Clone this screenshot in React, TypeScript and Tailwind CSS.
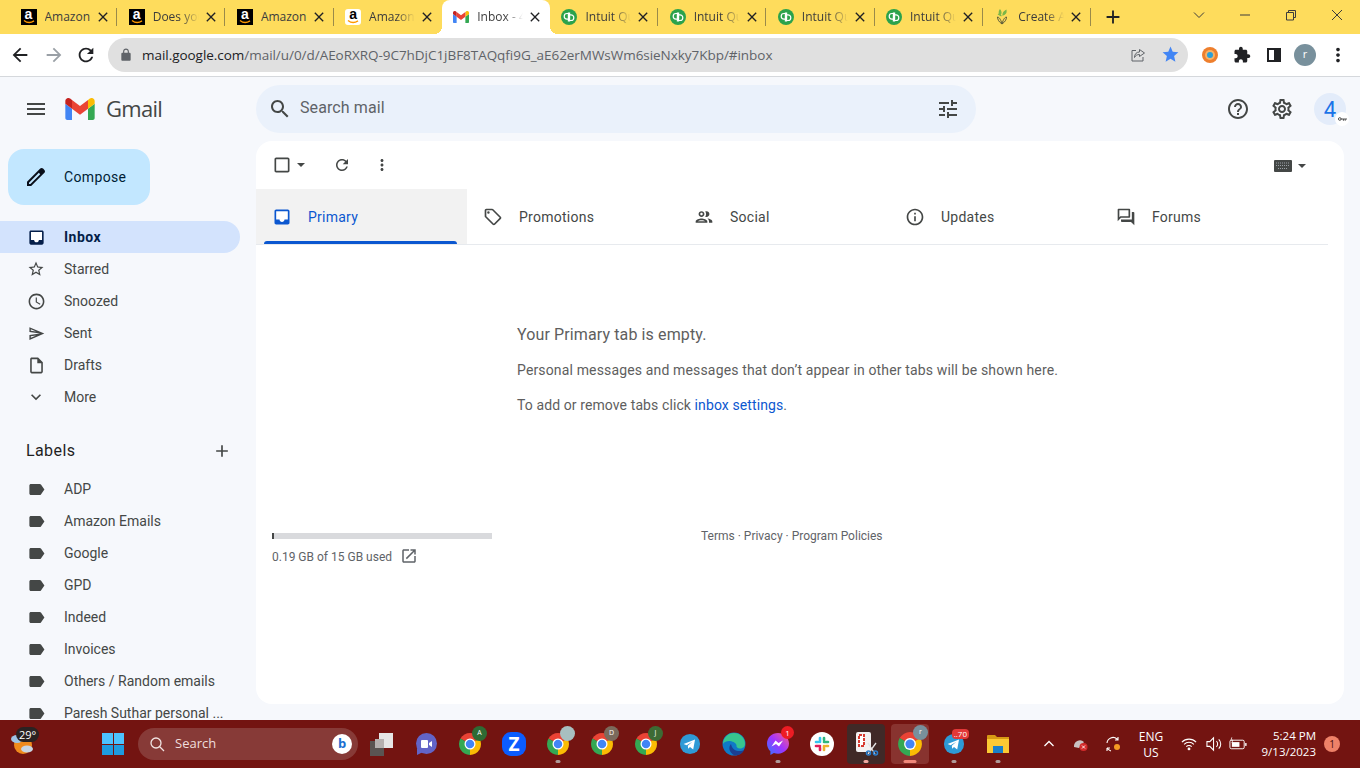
import type { ReactNode } from "react";

const ICONS = {
  inbox: "M19 3H4.99c-1.11 0-1.98.9-1.98 2L3 19c0 1.1.88 2 1.99 2H19c1.1 0 2-.9 2-2V5c0-1.1-.9-2-2-2zm0 12h-4c0 1.66-1.35 3-3 3s-3-1.34-3-3H4.99V5H19v10z",
  star: "M22 9.24l-7.19-.62L12 2 9.19 8.63 2 9.24l5.46 4.73L5.82 21 12 17.27 18.18 21l-1.63-7.03L22 9.24zM12 15.4l-3.76 2.27 1-4.28-3.32-2.88 4.38-.38L12 6.1l1.71 4.04 4.38.38-3.32 2.88 1 4.28L12 15.4z",
  clock: "M11.99 2C6.47 2 2 6.48 2 12s4.47 10 9.99 10C17.52 22 22 17.52 22 12S17.52 2 11.99 2zM12 20c-4.42 0-8-3.58-8-8s3.58-8 8-8 8 3.58 8 8-3.58 8-8 8zm.5-13H11v6l5.25 3.15.75-1.23-4.5-2.67z",
  send: "M4.01 6.03l7.51 3.22-7.52-1 .01-2.22m7.5 8.72L4 17.97v-2.22l7.51-1M2.01 3L2 10l15 2-15 2 .01 7L23 12 2.01 3z",
  draft: "M14 2H6c-1.1 0-1.99.9-1.99 2L4 20c0 1.1.89 2 1.99 2H18c1.1 0 2-.9 2-2V8l-6-6zM6 20V4h7v5h5v11H6z",
  chevron: "M16.59 8.59L12 13.17 7.41 8.59 6 10l6 6 6-6z",
  label: "M17.63 5.84C17.27 5.33 16.67 5 16 5L5 5.01C3.9 5.01 3 5.9 3 7v10c0 1.1.9 1.99 2 1.99L16 19c.67 0 1.27-.33 1.63-.84L22 12l-4.37-6.16z",
  pencil: "M20.41 4.94l-1.35-1.35c-.78-.78-2.05-.78-2.83 0L3 16.82V21h4.18L20.41 7.77c.79-.78.79-2.05 0-2.83zm-14 14.12L5 19v-1.36l9.82-9.82 1.41 1.41-9.82 9.83z",
  search: "M15.5 14h-.79l-.28-.27C15.41 12.59 16 11.11 16 9.5 16 5.91 13.09 3 9.5 3S3 5.91 3 9.5 5.91 16 9.5 16c1.61 0 3.09-.59 4.23-1.57l.27.28v.79l5 4.99L20.49 19l-4.99-5zm-6 0C7.01 14 5 11.99 5 9.5S7.01 5 9.5 5 14 7.01 14 9.5 11.99 14 9.5 14z",
  tune: "M3 17v2h6v-2H3zM3 5v2h10V5H3zm10 16v-2h8v-2h-8v-2h-2v6h2zM7 9v2H3v2h4v2h2V9H7zm14 4v-2H11v2h10zm-6-4h2V7h4V5h-4V3h-2v6z",
  help: "M11 18h2v-2h-2v2zm1-16C6.48 2 2 6.48 2 12s4.48 10 10 10 10-4.48 10-10S17.52 2 12 2zm0 18c-4.41 0-8-3.59-8-8s3.59-8 8-8 8 3.59 8 8-3.59 8-8 8zm0-14c-2.21 0-4 1.79-4 4h2c0-1.1.9-2 2-2s2 .9 2 2c0 2-3 1.75-3 5h2c0-2.25 3-2.5 3-5 0-2.21-1.79-4-4-4z",
  gear: "M19.43 12.98c.04-.32.07-.64.07-.98 0-.34-.03-.66-.07-.98l2.11-1.65c.19-.15.24-.42.12-.64l-2-3.46c-.09-.16-.26-.25-.44-.25-.06 0-.12.01-.17.03l-2.49 1c-.52-.4-1.08-.73-1.69-.98l-.38-2.65C14.46 2.18 14.25 2 14 2h-4c-.25 0-.46.18-.49.42l-.38 2.65c-.61.25-1.17.59-1.69.98l-2.49-1c-.06-.02-.12-.03-.18-.03-.17 0-.34.09-.43.25l-2 3.46c-.13.22-.07.49.12.64l2.11 1.65c-.04.32-.07.65-.07.98 0 .33.03.66.07.98l-2.11 1.65c-.19.15-.24.42-.12.64l2 3.46c.09.16.26.25.44.25.06 0 .12-.01.17-.03l2.49-1c.52.4 1.08.73 1.69.98l.38 2.65c.03.24.24.42.49.42h4c.25 0 .46-.18.49-.42l.38-2.65c.61-.25 1.17-.59 1.69-.98l2.49 1c.06.02.12.03.18.03.17 0 .34-.09.43-.25l2-3.46c.12-.22.07-.49-.12-.64l-2.11-1.65zm-1.98-1.71c.04.31.05.52.05.73 0 .21-.02.43-.05.73l-.14 1.13.89.7 1.08.84-.7 1.21-1.27-.51-1.04-.42-.9.68c-.43.32-.84.56-1.25.73l-1.06.43-.16 1.13-.2 1.35h-1.4l-.19-1.35-.16-1.13-1.06-.43c-.43-.18-.83-.41-1.23-.71l-.91-.7-1.06.43-1.27.51-.7-1.21 1.08-.84.89-.7-.14-1.13c-.03-.31-.05-.54-.05-.74s.02-.43.05-.73l.14-1.13-.89-.7-1.08-.84.7-1.21 1.27.51 1.04.42.9-.68c.43-.32.84-.56 1.25-.73l1.06-.43.16-1.13.2-1.35h1.39l.19 1.35.16 1.13 1.06.43c.43.18.83.41 1.23.71l.91.7 1.06-.43 1.27-.51.7 1.21-1.07.85-.89.7.14 1.13zM12 8c-2.21 0-4 1.79-4 4s1.79 4 4 4 4-1.79 4-4-1.79-4-4-4zm0 6c-1.1 0-2-.9-2-2s.9-2 2-2 2 .9 2 2-.9 2-2 2z",
  refresh: "M17.65 6.35C16.2 4.9 14.21 4 12 4c-4.42 0-7.99 3.58-7.99 8s3.57 8 7.99 8c3.73 0 6.84-2.55 7.73-6h-2.08c-.82 2.33-3.04 4-5.65 4-3.31 0-6-2.69-6-6s2.69-6 6-6c1.66 0 3.14.69 4.22 1.78L13 11h7V4l-2.35 2.35z",
  dots: "M12 8c1.1 0 2-.9 2-2s-.9-2-2-2-2 .9-2 2 .9 2 2 2zm0 2c-1.1 0-2 .9-2 2s.9 2 2 2 2-.9 2-2-.9-2-2-2zm0 6c-1.1 0-2 .9-2 2s.9 2 2 2 2-.9 2-2-.9-2-2-2z",
  tag: "M21.41 11.58l-9-9C12.05 2.22 11.55 2 11 2H4c-1.1 0-2 .9-2 2v7c0 .55.22 1.05.59 1.42l9 9c.36.36.86.58 1.41.58s1.05-.22 1.41-.59l7-7c.37-.36.59-.86.59-1.41s-.23-1.06-.59-1.42zM13 20.01L4 11V4h7v-.01l9 8.99-7 7.03zM6.5 5A1.5 1.5 0 1 0 6.5 8 1.5 1.5 0 1 0 6.5 5z",
  people: "M9 13.75c-2.34 0-7 1.17-7 3.5V19h14v-1.75c0-2.33-4.66-3.5-7-3.5zM4.34 17c.84-.58 2.87-1.25 4.66-1.25s3.82.67 4.66 1.25H4.34zM9 12c1.93 0 3.5-1.57 3.5-3.5S10.93 5 9 5 5.5 6.57 5.5 8.5 7.07 12 9 12zm0-5c.83 0 1.5.67 1.5 1.5S9.83 10 9 10s-1.5-.67-1.5-1.5S8.17 7 9 7zm7.04 6.81c1.16.84 1.96 1.96 1.96 3.44V19h4v-1.75c0-2.02-3.5-3.17-5.96-3.44zM15 12c1.93 0 3.5-1.57 3.5-3.5S16.93 5 15 5c-.54 0-1.04.13-1.5.35.63.89 1 1.98 1 3.15s-.37 2.26-1 3.15c.46.22.96.35 1.5.35z",
  info: "M11 7h2v2h-2zm0 4h2v6h-2zm1-9C6.48 2 2 6.48 2 12s4.48 10 10 10 10-4.48 10-10S17.52 2 12 2zm0 18c-4.41 0-8-3.59-8-8s3.59-8 8-8 8 3.59 8 8-3.59 8-8 8z",
  forum: "M15 4v7H5.17l-.59.59-.58.58V4h11m1-2H3c-.55 0-1 .45-1 1v14l4-4h10c.55 0 1-.45 1-1V3c0-.55-.45-1-1-1zm5 4h-2v9H6v2c0 .55.45 1 1 1h11l4 4V7c0-.55-.45-1-1-1z",
  open: "M19 19H5V5h7V3H5c-1.11 0-2 .9-2 2v14c0 1.1.89 2 2 2h14c1.1 0 2-.9 2-2v-7h-2v7zM14 3v2h3.59l-9.83 9.83 1.41 1.41L19 6.41V10h2V3h-7z",
  menu: "M3 18h18v-2H3v2zm0-5h18v-2H3v2zm0-7v2h18V6H3z",
  plus: "M19 13h-6v6h-2v-6H5v-2h6V5h2v6h6v2z",
  checkbox: "M19 5v14H5V5h14m0-2H5c-1.1 0-2 .9-2 2v14c0 1.1.9 2 2 2h14c1.1 0 2-.9 2-2V5c0-1.1-.9-2-2-2z",
  back: "M20 11H7.83l5.59-5.59L12 4l-8 8 8 8 1.41-1.41L7.83 13H20v-2z",
  forward: "M12 4l-1.41 1.41L16.17 11H4v2h12.17l-5.58 5.59L12 20l8-8z",
  lock: "M18 8h-1V6c0-2.76-2.24-5-5-5S7 3.24 7 6v2H6c-1.1 0-2 .9-2 2v10c0 1.1.9 2 2 2h12c1.1 0 2-.9 2-2V10c0-1.1-.9-2-2-2zM9 6c0-1.66 1.34-3 3-3s3 1.34 3 3v2H9V6z",
  starFill: "M12 17.27L18.18 21l-1.64-7.03L22 9.24l-7.19-.61L12 2 9.19 8.63 2 9.24l5.46 4.73L5.82 21z",
  puzzle: "M20.5 11H19V7c0-1.1-.9-2-2-2h-4V3.5C13 2.12 11.88 1 10.5 1S8 2.12 8 3.5V5H4c-1.1 0-1.99.9-1.99 2v3.8H3.5c1.49 0 2.7 1.21 2.7 2.7s-1.21 2.7-2.7 2.7H2V20c0 1.1.9 2 2 2h3.8v-1.5c0-1.49 1.21-2.7 2.7-2.7s2.7 1.21 2.7 2.7V22H17c1.1 0 2-.9 2-2v-4h1.5c1.38 0 2.5-1.12 2.5-2.5S21.88 11 20.5 11z",
  close: "M19 6.41L17.59 5 12 10.59 6.41 5 5 6.41 10.59 12 5 17.59 6.41 19 12 13.41 17.59 19 19 17.59 13.41 12z",
};

function Icon({ name, className }: { name: keyof typeof ICONS; className: string }) {
  return (
    <svg viewBox="0 0 24 24" fill="currentColor" className={`shrink-0 ${className}`}>
      {/* the inbox glyph has a white tray in gmail */}
      {name === "inbox" && <path d="M5 5h14v10h-4c0 1.66-1.35 3-3 3s-3-1.34-3-3H5z" fill="#fff" />}
      <path d={ICONS[name]} />
    </svg>
  );
}

function AmazonFav({ light }: { light?: boolean }) {
  return (
    <div className={`relative w-4 h-4 shrink-0 overflow-hidden ${light ? "bg-white rounded-[3px]" : "bg-black"}`}>
      <span className={`absolute inset-x-0 -top-[3px] text-center text-[14px] font-bold leading-[16px] font-['Liberation_Sans',sans-serif] ${light ? "text-black" : "text-white"}`}>a</span>
      <svg viewBox="0 0 16 16" className="absolute inset-0 w-4 h-4">
        <path d="M3 11.5c3 2.4 7 2.4 10 .4" stroke="#f90" strokeWidth="1.4" fill="none" />
      </svg>
    </div>
  );
}

function QbFav() {
  return (
    <svg viewBox="0 0 16 16" className="w-4 h-4 shrink-0">
      <circle cx="8" cy="8" r="8" fill="#2ba24c" />
      <path d="M7.4 4.5H6a2.6 2.6 0 0 0 0 5.6h.8M7.4 3.4v9M8.6 11.5H10a2.6 2.6 0 0 0 0-5.6h-.8M8.6 3.6v9" stroke="#fff" strokeWidth="1.2" fill="none" />
    </svg>
  );
}

function GmailLogo({ className }: { className: string }) {
  return (
    <svg viewBox="52 42 88 66" className={className}>
      <path fill="#4285f4" d="M58 108h14V74L52 59v43c0 3.32 2.69 6 6 6" />
      <path fill="#34a853" d="M120 108h14c3.32 0 6-2.69 6-6V59l-20 15" />
      <path fill="#fbbc04" d="M120 48v26l20-15v-8c0-7.42-8.47-11.65-14.4-7.2" />
      <path fill="#ea4335" d="M72 74V48l24 18 24-18v26L96 92" />
      <path fill="#c5221f" d="M52 51v8l20 15V48l-5.6-4.2c-5.94-4.45-14.4-.22-14.4 7.2" />
    </svg>
  );
}

function PlantFav() {
  return (
    <svg viewBox="0 0 16 16" className="w-4 h-4 shrink-0">
      <path d="M8 15C5 13 3.5 10.5 3.5 8c1.5.3 3 1.5 4.5 7zM8 15c3-2 4.5-4.5 4.5-7-1.500.3-3 1.500-4.500 7z" fill="none" stroke="#5a5a3a" strokeWidth="1" />
      <path d="M6 6C5 4 5 2.500 6 1c1.200 1.500 1.500 3 0 5zM9 6c0-2 1-3.500 3-4.500.3 2-.8 3.800-3 4.500zM7.500 7 4 5" stroke="#7ab648" strokeWidth="1.200" fill="#7ab648" />
    </svg>
  );
}

const TABS: { title: string; fav: ReactNode; active?: boolean; full?: boolean }[] = [
  { title: "Amazon", fav: <AmazonFav />, full: true },
  { title: "Does your", fav: <AmazonFav /> },
  { title: "Amazon", fav: <AmazonFav />, full: true },
  { title: "Amazon.com", fav: <AmazonFav light /> },
  { title: "Inbox - 4", fav: <GmailLogo className="w-4 h-3 shrink-0" />, active: true },
  { title: "Intuit Quick", fav: <QbFav /> },
  { title: "Intuit Quick", fav: <QbFav /> },
  { title: "Intuit Quick", fav: <QbFav /> },
  { title: "Intuit Quick", fav: <QbFav /> },
  { title: "Create An", fav: <PlantFav /> },
];

function Tab({ title, fav, active, full, hideSep }: { title: string; fav: ReactNode; active?: boolean; full?: boolean; hideSep?: boolean }) {
  return (
    <div className={`relative flex items-center w-[108.2px] h-full pl-[11.5px] pb-[1px] shrink-0 ${active ? "bg-white rounded-t-lg" : ""}`}>
      {active && <div className="absolute -left-2 bottom-0 w-2 h-2 bg-[radial-gradient(circle_at_0_0,transparent_8px,white_8px)]" />}
      {active && <div className="absolute -right-2 bottom-0 w-2 h-2 bg-[radial-gradient(circle_at_100%_0,transparent_8px,white_8px)]" />}
      {fav}
      <span className={`ml-2 w-[46px] overflow-hidden whitespace-nowrap text-[12px] text-[#3c3c3c] ${full ? "" : "[mask-image:linear-gradient(to_right,black_60%,transparent)]"}`}>
        {title}
      </span>
      <Icon name="close" className="w-4 h-4 ml-1 text-[#202124]" />
      {!active && !hideSep && <div className="absolute right-0 top-[8px] h-[18px] w-px bg-[#9a8a4a]" />}
    </div>
  );
}

function TabStrip() {
  return (
    <div className="flex items-center h-[34px] bg-[#fedc5c] pl-[9px] font-['Open_Sans',sans-serif]">
      <div className="flex h-full">
        {TABS.map((t, i) => (
          <Tab key={i} title={t.title} fav={t.fav} active={t.active} full={t.full} hideSep={i === 3} />
        ))}
      </div>
      <Icon name="plus" className="w-[22px] h-[22px] ml-[11px] text-[#202124]" />
      <div className="flex items-center h-full ml-auto text-[#3c3c3c]">
        <svg viewBox="0 0 12 12" className="w-3 h-3 mr-[34px] mb-[4px]"><path d="M1 3.500l5 5 5-5" stroke="currentColor" fill="none" /></svg>
        <svg viewBox="0 0 12 12" className="w-3 h-3 mr-[34px] mb-[4px]"><path d="M1 6h10" stroke="currentColor" fill="none" /></svg>
        <svg viewBox="0 0 12 12" className="w-3 h-3 mr-[34px] mb-[4px]"><path d="M1.500 3.500h7v7.500h-7zM3.500 3.500V1.500h7v7h-2" stroke="currentColor" fill="none" /></svg>
        <svg viewBox="0 0 12 12" className="w-3 h-3 mr-[17px] mb-[4px]"><path d="M1 1l10 10M11 1 1 11" stroke="currentColor" fill="none" /></svg>
      </div>
    </div>
  );
}

function Toolbar() {
  return (
    <div className="flex items-center h-[43px] bg-white border-b border-[#d5d8dc] pb-[1px] font-['Open_Sans',sans-serif]">
      <Icon name="back" className="w-[22px] h-[22px] ml-[9px] text-[#202124]" />
      <Icon name="forward" className="w-[22px] h-[22px] ml-[12px] text-[#9aa0a6]" />
      <Icon name="refresh" className="w-[22px] h-[22px] ml-[10px] text-[#202124]" />
      <div className="flex items-center w-[1080px] h-[34px] ml-[11px] rounded-full bg-[#e0e0e0] pl-[11px]">
        <Icon name="lock" className="w-[14px] h-[14px] text-[#5f6368]" />
        <div className="ml-[9px] pt-[1px] text-[13.5px] tracking-[-0.04px] whitespace-nowrap text-[#5f6368]">
          <span className="text-[#202124]">mail.google.com</span>/mail/u/0/d/AEoRXRQ-9C7hDjC1jBF8TAQqfi9G_aE62erMWsWm6sieNxky7Kbp/#inbox
        </div>
        <svg viewBox="0 0 16 16" className="w-4 h-4 ml-auto text-[#5f6368]" fill="none" stroke="currentColor">
          <path d="M6 3.500H2v10.500h11v-4M9.500 2.500l5 3.500-5 3.500V7.500c-2.500 0-4 1-5 3 0-3.500 2-5.500 5-5.500z" />
        </svg>
        <Icon name="starFill" className="w-[19px] h-[19px] ml-[15px] mr-[8px] text-[#4285f4]" />
      </div>
      <svg viewBox="0 0 16 16" className="w-4 h-4 ml-[14px]">
        <circle cx="8" cy="8" r="8" fill="#ee7f2d" />
        <circle cx="8" cy="8" r="5" fill="#f7b267" />
        <circle cx="8" cy="8" r="3" fill="#2a9fd8" />
      </svg>
      <Icon name="puzzle" className="w-[18px] h-[18px] ml-[15px] text-[#202124]" />
      <div className="flex w-[14px] h-[14px] ml-4 border-2 border-[#202124]"><div className="ml-auto w-[5px] bg-[#202124]" /></div>
      <div className="flex items-center justify-center w-[22px] h-[22px] ml-[13px] rounded-full bg-[#78909c] text-[11px] text-white">r</div>
      <Icon name="dots" className="w-[22px] h-[22px] ml-[11px] text-[#202124]" />
    </div>
  );
}

const NAV_ICON_SIZE: Partial<Record<keyof typeof ICONS, string>> = {
  star: "w-[18px] h-[18px] mx-[1px]",
  send: "w-[17px] h-[17px] mx-[1.5px]",
  inbox: "w-[19px] h-[19px] mx-[0.5px]",
  clock: "w-[19px] h-[19px] mx-[0.5px]",
  draft: "w-[19px] h-[19px] mx-[0.5px]",
  label: "w-[19px] h-[19px] mx-[0.5px]",
};

function NavRow({ icon, label, active }: { icon: keyof typeof ICONS; label: string; active?: boolean }) {
  return (
    <div className={`flex items-center h-8 w-[240px] shrink-0 pl-[26px] gap-[18px] rounded-r-full text-[14px] whitespace-nowrap ${active ? "bg-[#d3e3fd] font-bold tracking-[0.5px] text-[#041e49]" : "text-[#444746]"}`}>
      <Icon name={icon} className={`${NAV_ICON_SIZE[icon] ?? "w-5 h-5"} ${active ? "text-[#041e49]" : "text-[#444746]"}`} />
      <span>{label}</span>
    </div>
  );
}

const LABELS = ["ADP", "Amazon Emails", "Google", "GPD", "Indeed", "Invoices", "Others / Random emails", "Paresh Suthar personal ..."];

function Sidebar() {
  return (
    <div className="w-[256px] shrink-0 overflow-hidden flex flex-col">
      <div className="flex items-center w-[142px] h-14 shrink-0 ml-2 mt-2 mb-4 pl-4 gap-[16px] rounded-2xl bg-[#c2e7ff] text-[14px] font-[450] tracking-[0.35px] text-[#001d35]">
        <Icon name="pencil" className="w-6 h-6 text-[#0a0f1a]" />
        <span>Compose</span>
      </div>
      <NavRow icon="inbox" label="Inbox" active />
      <NavRow icon="star" label="Starred" />
      <NavRow icon="clock" label="Snoozed" />
      <NavRow icon="send" label="Sent" />
      <NavRow icon="draft" label="Drafts" />
      <NavRow icon="chevron" label="More" />
      <div className="flex items-center justify-between shrink-0 h-[44px] mt-4 pl-[26px] pr-2 w-[240px] text-[16px] tracking-[0.4px] text-[#1f1f1f]">
        <span>Labels</span>
        <Icon name="plus" className="w-5 h-5 text-[#444746]" />
      </div>
      {LABELS.map((l) => (
        <NavRow key={l} icon="label" label={l} />
      ))}
    </div>
  );
}

function InboxTab({ icon, label, active }: { icon: keyof typeof ICONS; label: string; active?: boolean }) {
  return (
    <div className={`relative flex items-center w-[211px] h-full pl-[16px] pt-[1px] gap-[16px] text-[14px] font-[450] tracking-[0.25px] ${active ? "bg-[#f2f2f2] text-[#0b57d0]" : "text-[#444746]"}`}>
      <Icon name={icon} className="w-5 h-5" />
      <span>{label}</span>
      {active && <div className="absolute left-2 right-[10px] bottom-0 h-[3px] rounded-t-sm bg-[#0b57d0]" />}
    </div>
  );
}

function MailCard() {
  return (
    <div className="flex-1 flex flex-col mr-4 mb-4 rounded-2xl bg-white">
      <div className="flex items-center h-12 shrink-0 pl-[16px] text-[#444746]">
        <Icon name="checkbox" className="w-5 h-5" />
        <div className="ml-[5px] w-0 h-0 border-x-[4px] border-x-transparent border-t-[4px] border-t-[#444746]" />
        <Icon name="refresh" className="w-[18px] h-[18px] ml-7" />
        <Icon name="dots" className="w-[18px] h-[18px] ml-[22px]" />
        <div className="flex items-center ml-auto mr-[38px] mt-[2px] gap-[6px]">
          <svg viewBox="0 0 18 12" className="w-[18px] h-3">
            <rect width="18" height="12" rx="1" fill="#444746" />
            <path d="M2 3h14M2 5.500h14M4 8.500h10" stroke="#9aa0a6" strokeWidth="1" strokeDasharray="1 1" />
          </svg>
          <div className="w-0 h-0 border-x-[4px] border-x-transparent border-t-[4px] border-t-[#444746]" />
        </div>
      </div>
      <div className="flex h-[56px] shrink-0 mr-4 border-b border-[#e7eaee]">
        <InboxTab icon="inbox" label="Primary" active />
        <InboxTab icon="tag" label="Promotions" />
        <InboxTab icon="people" label="Social" />
        <InboxTab icon="info" label="Updates" />
        <InboxTab icon="forum" label="Forums" />
      </div>
      <div className="pl-[261px] pt-[80px] text-[#5e5e5e]">
        <div className="text-[16px] leading-5 tracking-[0.12px]">Your Primary tab is empty.</div>
        <div className="mt-[15px] text-[14px] leading-5 tracking-[0.15px]">Personal messages and messages that don’t appear in other tabs will be shown here.</div>
        <div className="mt-[15px] text-[14px] leading-5 tracking-[0.1px]">
          To add or remove tabs click <span className="text-[#0b57d0]">inbox settings</span>.
        </div>
      </div>
      <div className="flex items-start pl-4 mt-[118px]">
        <div className="w-[220px]">
          <div className="h-[6px] bg-[#d9dadd]"><div className="w-[2px] h-full bg-[#444746]" /></div>
          <div className="flex items-center mt-[9px] text-[12px] text-[#5f6368]">
            <span>0.19 GB of 15 GB used</span>
            <Icon name="open" className="w-[18px] h-[18px] ml-2 -mt-[3px] text-[#5f6368]" />
          </div>
        </div>
        <div className="ml-[209px] -mt-[5px] text-[12px] leading-4 text-[#5f6368]">Terms · Privacy · Program Policies</div>
      </div>
    </div>
  );
}

function Header() {
  return (
    <div className="flex items-center h-16 shrink-0">
      <div className="flex items-center w-[256px] shrink-0">
        <Icon name="menu" className="w-6 h-6 ml-6 text-[#444746]" />
        <GmailLogo className="w-[30px] h-[22px] ml-[17px]" />
        <span className="ml-[11px] -mt-[2px] text-[22px] text-[#444746] font-['Open_Sans',sans-serif] tracking-[-0.7px]">Gmail</span>
      </div>
      <div className="flex items-center w-[720px] h-12 rounded-full bg-[#eaf1fb] pl-[12px] pr-[16px]">
        <Icon name="search" className="w-6 h-6 text-[#444746]" />
        <span className="ml-[8px] -mt-[2px] text-[16px] tracking-[0.1px] text-[#5f6368]">Search mail</span>
        <Icon name="tune" className="w-6 h-6 ml-auto text-[#444746]" />
      </div>
      <div className="flex items-center ml-auto pr-[14px]">
        <Icon name="help" className="w-6 h-6 text-[#444746]" />
        <Icon name="gear" className="w-6 h-6 ml-[20px] text-[#444746]" />
        <div className="relative flex items-center justify-center w-8 h-8 ml-[20px] rounded-full bg-[#e3ecfa] text-[22px] text-[#1a73e8]">
          4
          <div className="absolute -right-[3px] -bottom-[1px] flex items-center justify-center w-[14px] h-[14px] rounded-full bg-white">
            <svg viewBox="0 0 10 6" className="w-[9px] h-[6px]"><path d="M3 3h7M8 3v2M6 3v2" stroke="#444" fill="none" /><circle cx="2" cy="3" r="1.500" fill="none" stroke="#444" /></svg>
          </div>
        </div>
      </div>
    </div>
  );
}

function Chrome({ badge, badgeClass, size = "w-6 h-6" }: { badge?: string; badgeClass?: string; size?: string }) {
  return (
    <div className="relative">
      <svg viewBox="0 0 48 48" className={size}>
        <path d="M24 24 43.050 13A22 22 0 0 0 4.950 13z" fill="#ea4335" />
        <path d="M24 24 4.950 13A22 22 0 0 0 24 46z" fill="#34a853" />
        <path d="M24 24 24 46A22 22 0 0 0 43.050 13z" fill="#fbbc04" />
        <circle cx="24" cy="24" r="11" fill="#fff" />
        <circle cx="24" cy="24" r="8.500" fill="#4285f4" />
      </svg>
      {badge !== undefined && (
        <div className={`absolute -right-[5px] -top-[6px] flex items-center justify-center w-[15px] h-[15px] rounded-full text-[7px] text-white ${badgeClass}`}>{badge}</div>
      )}
    </div>
  );
}

function Telegram() {
  return (
    <svg viewBox="0 0 24 24" className="w-[22px] h-[22px]">
      <circle cx="12" cy="12" r="11" fill="#2e9ad6" />
      <path d="M5 12l12.500-5-2 11-3.500-2.700-2 1.900-.4-3.200 5-4.500-6.300 3.800z" fill="#fff" />
    </svg>
  );
}

function Dock({ children, dot, bg, dotClass }: { children: ReactNode; dot?: boolean; bg?: string; dotClass?: string }) {
  return (
    <div className="relative flex items-center justify-center w-11 h-full shrink-0">
      {bg && <div className={`absolute left-[3px] right-[3px] top-[4px] bottom-[4px] rounded ${bg}`} />}
      <div className="relative">{children}</div>
      {dot && <div className={`absolute bottom-[5px] left-1/2 -translate-x-1/2 h-[3px] rounded-full ${dotClass ?? "w-[5px] bg-[#b09a98]"}`} />}
    </div>
  );
}

function Taskbar() {
  return (
    <div className="flex items-center h-12 shrink-0 bg-[#731411] text-white font-['Open_Sans',sans-serif]">
      <div className="relative w-[91px] h-full shrink-0">
        <svg viewBox="0 0 24 24" className="absolute left-[10px] top-[12px] w-6 h-6">
          <circle cx="13" cy="13" r="9" fill="#f08a1d" />
          <ellipse cx="7" cy="7" rx="6" ry="4" fill="#9ec3e6" />
          <ellipse cx="17" cy="17" rx="6" ry="3.500" fill="#c9d6e4" />
        </svg>
        <span className="absolute left-[16px] top-[7px] px-[3px] rounded-full bg-[#2a2222] text-[11px] leading-[15px]">29°</span>
      </div>
      <div className="grid grid-cols-2 gap-[1px] w-[22px] h-[22px] shrink-0 ml-[11px]">
        <div className="bg-[#4cc2ff]" /><div className="bg-[#4cc2ff]" /><div className="bg-[#1e9be0]" /><div className="bg-[#1e9be0]" />
      </div>
      <div className="flex items-center w-[220px] h-[32px] ml-[14px] shrink-0 rounded-full bg-[#873a37] pl-[11px] pr-[6px]">
        <svg viewBox="0 0 16 16" className="w-4 h-4" fill="none" stroke="#f1e4e3" strokeWidth="1.300"><circle cx="7" cy="7" r="5" /><path d="M10.500 10.500 15 15" /></svg>
        <span className="ml-[10px] text-[13px] text-[#efdedd]">Search</span>
        <div className="flex items-center justify-center ml-auto w-[20px] h-[20px] rounded-full bg-white text-[13px] font-bold text-[#1b6fd0]">b</div>
      </div>
      <div className="flex h-full ml-[2px]">
        <Dock>
          <div className="relative w-6 h-6">
            <div className="absolute left-0 bottom-0 w-[14px] h-[15px] bg-[#5a5452]" />
            <div className="absolute right-[1px] top-[1px] w-[14px] h-[15px] bg-[#e6e6e6]" />
            <div className="absolute left-[5px] top-[7px] w-[9px] h-[9px] bg-[#b5b0af]" />
          </div>
        </Dock>
        <Dock>
          <svg viewBox="0 0 24 24" className="w-6 h-6">
            <circle cx="12.500" cy="11.500" r="10.500" fill="#6264c7" />
            <path d="M3 16v7l6-3z" fill="#6264c7" />
            <rect x="7" y="8" width="7" height="8" rx="1" fill="#fff" />
            <path d="M15 11l3-2v6l-3-2z" fill="#fff" />
          </svg>
        </Dock>
        <Dock><Chrome badge="A" badgeClass="bg-[#2e6b34]" /></Dock>
        <Dock>
          <div className="flex items-center justify-center w-6 h-6 rounded-[9px] bg-[#0b5cff] text-[19px] font-bold">Z</div>
        </Dock>
        <Dock dot><Chrome badge="" badgeClass="bg-[#a8bfc0]" /></Dock>
        <Dock><Chrome badge="D" badgeClass="bg-[#7b6a5c]" /></Dock>
        <Dock><Chrome badge="J" badgeClass="bg-[#3d6b34]" /></Dock>
        <Dock><Telegram /></Dock>
        <Dock>
          <svg viewBox="0 0 24 24" className="w-6 h-6">
            <circle cx="12" cy="12" r="11.500" fill="#0f7ac6" />
            <path d="M1 12A11 11 0 0 1 23 12c0 3-2.500 4.500-5 4.500S14 15 14.500 13C13 9 4 7 1 12z" fill="#37c58f" />
            <path d="M9 12c-3 3-2 9 4 11.500 5 0 8-3 9.500-6-3 2.500-12 3-13.500-5.500z" fill="#1b3f92" />
          </svg>
        </Dock>
        <Dock dot>
          <div className="relative">
            <svg viewBox="0 0 24 24" className="w-6 h-6">
              <defs>
                <linearGradient id="msg" x1="0" y1="1" x2="1" y2="0">
                  <stop offset="0" stopColor="#2b7bff" />
                  <stop offset="0.5" stopColor="#a033ff" />
                  <stop offset="1" stopColor="#ff5f80" />
                </linearGradient>
              </defs>
              <path d="M12 1C5.800 1 1 5.600 1 11.600c0 3.100 1.300 5.800 3.400 7.700V23l3.500-1.900c1.300.4 2.700.6 4.100.6 6.200 0 11-4.600 11-10.100S18.200 1 12 1z" fill="url(#msg)" />
              <path d="M5.500 14.500l4-6 3 2.500 4.500-2.500-4 6-3-2.500z" fill="#fff" />
            </svg>
            <div className="absolute -right-[4px] -top-[6px] flex items-center justify-center w-[13px] h-[13px] rounded-full bg-[#ed1c24] text-[8px]">1</div>
          </div>
        </Dock>
        <Dock>
          <div className="flex items-center justify-center w-6 h-6 rounded-full bg-white">
            <svg viewBox="0 0 16 16" className="w-4 h-4" strokeWidth="2.600" strokeLinecap="round">
              <path d="M6 2v4" stroke="#36c5f0" /><path d="M2 6h2" stroke="#36c5f0" />
              <path d="M14 6h-4" stroke="#2eb67d" /><path d="M10 2v2" stroke="#2eb67d" />
              <path d="M10 14v-4" stroke="#ecb22e" /><path d="M14 10h-2" stroke="#ecb22e" />
              <path d="M2 10h4" stroke="#e01e5a" /><path d="M6 14v-2" stroke="#e01e5a" />
            </svg>
          </div>
        </Dock>
        <Dock dot bg="bg-[#402927]" dotClass="w-[5px] bg-[#f0a8a0]">
          <svg viewBox="0 0 26 26" className="w-[26px] h-[26px]">
            <rect x="3" y="1" width="15" height="20" rx="2" fill="#f3f1f1" />
            <path d="M6 4h5v11H6z" fill="#fff" stroke="#d7392f" strokeWidth="2" strokeDasharray="3 1" />
            <path d="M15 12l7 11M23 12l-8 11" stroke="#e4e4e4" strokeWidth="1.300" />
            <circle cx="15.500" cy="22" r="2" fill="none" stroke="#2a7fd0" strokeWidth="1.500" />
            <circle cx="22.500" cy="22" r="2" fill="none" stroke="#2a7fd0" strokeWidth="1.500" />
          </svg>
        </Dock>
        <Dock dot bg="bg-[#88332f]" dotClass="w-[13px] bg-[#f0877a]">
          <Chrome badge="r" badgeClass="bg-[#78909c]" size="w-[26px] h-[26px]" />
        </Dock>
        <Dock dot>
          <div className="relative">
            <Telegram />
            <div className="absolute -right-[4px] -top-[4px] px-[2px] rounded-sm bg-[#e23838] text-[8px] leading-[10px]">..70</div>
          </div>
        </Dock>
        <Dock dot>
          <svg viewBox="0 0 24 24" className="w-6 h-6">
            <path d="M1 4a1 1 0 0 1 1-1h7l2 2h12v4H1z" fill="#d79a14" />
            <rect x="1" y="7" width="22" height="14" fill="#fcc934" />
            <rect x="7" y="14" width="10" height="7" fill="#1a7fc9" />
          </svg>
        </Dock>
      </div>
      <div className="flex items-center flex-1 h-full">
        <svg viewBox="0 0 12 12" className="w-3 h-3 ml-[23px]" fill="none" stroke="#fff" strokeWidth="1.300"><path d="M1.500 8 6 3.500 10.500 8" /></svg>
        <svg viewBox="0 0 16 16" className="w-4 h-4 ml-[17px]">
          <path d="M2 11a6 6 0 0 1 10-5l-5 6z" fill="#c9c2c2" />
          <circle cx="11.500" cy="11" r="4" fill="#d32b2b" />
          <path d="M10 9.500l3 3M13 9.500l-3 3" stroke="#fff" strokeWidth=".9" />
        </svg>
        <svg viewBox="0 0 18 18" className="w-[18px] h-[18px] ml-4" fill="none" stroke="#fff" strokeWidth="1.100">
          <path d="M3 8a6 6 0 0 1 10-4l1 1M14 2v3h-3M3 13v3M3 13h3M3 13l1 1a6 6 0 0 0 3 2" />
          <circle cx="13" cy="12" r="3" fill="#f59b23" stroke="none" />
        </svg>
        <div className="w-[44px] ml-[7px] text-center text-[12px] leading-4 mt-[2px] shrink-0 font-medium">ENG<br />US</div>
        <svg viewBox="0 0 18 14" className="w-[16px] h-[14px] ml-[8px]" fill="none" stroke="#fff" strokeWidth="1.200">
          <path d="M1 5a11 11 0 0 1 16 0M3.500 7.500a7.500 7.500 0 0 1 11 0M6 10a4 4 0 0 1 6 0" />
          <circle cx="9" cy="12.500" r="1" fill="#fff" />
        </svg>
        <svg viewBox="0 0 18 16" className="w-[17px] h-[16px] ml-[9px]" fill="none" stroke="#fff" strokeWidth="1.100">
          <path d="M1 5.500h3l4-4v13l-4-4H1zM11 5a4 4 0 0 1 0 6M13.500 3a7 7 0 0 1 0 10" />
        </svg>
        <svg viewBox="0 0 20 14" className="w-[19px] h-[14px] ml-[6px]">
          <rect x="1" y="3" width="15" height="9" rx="1.500" fill="none" stroke="#fff" />
          <rect x="3" y="5" width="8" height="5" fill="#fff" />
          <rect x="17" y="6" width="1.500" height="3" fill="#fff" />
          <path d="M3 0l-1 3h2l-1 3" stroke="#fff" fill="none" strokeWidth=".8" />
        </svg>
        <div className="ml-auto mr-2 text-right text-[11.500px] leading-4 whitespace-nowrap font-medium">5:24 PM<br />9/13/2023</div>
        <div className="flex items-center justify-center w-4 h-4 mr-5 rounded-full bg-[#ee8168] text-[10px] text-[#4a0f0c]">1</div>
      </div>
    </div>
  );
}

export default function App() {
  return (
    <div className="flex flex-col w-[1360px] h-[768px] overflow-hidden bg-[#f6f8fc] font-['Roboto',sans-serif]">
      <TabStrip />
      <Toolbar />
      <div className="flex-1 flex flex-col min-h-0">
        <Header />
        <div className="flex-1 flex min-h-0">
          <Sidebar />
          <MailCard />
        </div>
      </div>
      <Taskbar />
    </div>
  );
}
